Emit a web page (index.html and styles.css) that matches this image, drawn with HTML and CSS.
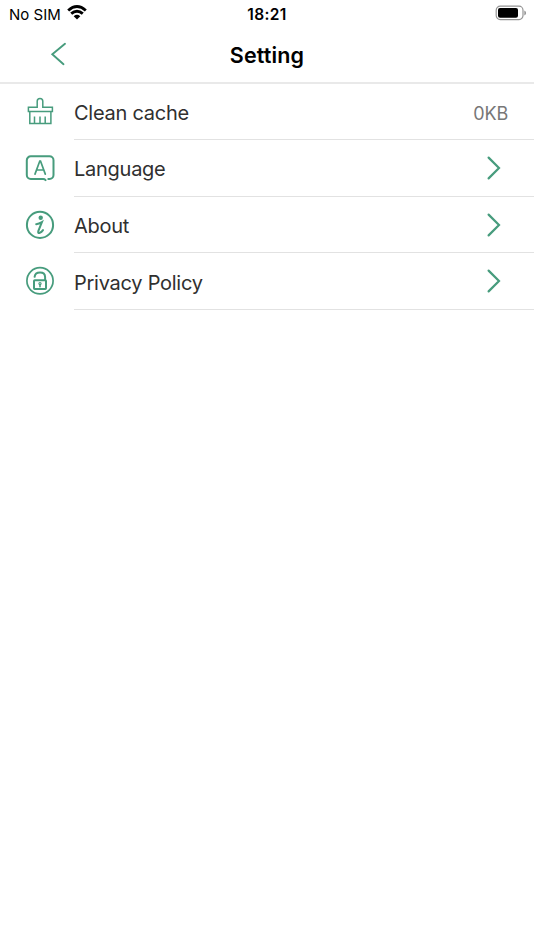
FILE: index.html
```html
<!DOCTYPE html>
<html lang="en">
<head>
<meta charset="utf-8">
<title>Setting</title>
<link rel="stylesheet" href="styles.css">
</head>
<body>
<div class="status">
  <div class="carrier"><span>No SIM</span>
    <svg class="wifi" width="20" height="15" viewBox="0 0 20 15"><g fill="none" stroke="#000" stroke-width="2.9"><path d="M1.2 5.5Q10-2.3 18.8 5.5"/><path d="M4.2 8.7Q10 3.6 15.8 8.7"/></g><path d="M6.7 11.2Q10 8.4 13.3 11.2L10 14.5Z"/></svg>
  </div>
  <time class="clock">18:21</time>
  <svg class="battery" width="32" height="16" viewBox="0 0 32 16"><rect x="1.2" y="1.2" width="26.8" height="13.4" rx="4" fill="none" stroke="#949494" stroke-width="1.2"/><rect x="3" y="3" width="20" height="9.8" rx="2"/><path d="M29.3 5.5Q31.1 6.3 31.1 8T29.3 10.4Z" fill="#949494"/></svg>
</div>
<header class="nav">
  <svg class="back" width="18" height="24" viewBox="0 0 18 24"><path d="M15 1.8 2.3 12.2 13.5 22.2"/></svg>
  <h1>Setting</h1>
</header>
<main class="list">
  <div class="row">
    <svg class="icon thin" viewBox="0 0 32 32"><path d="M4.4 11.2H13.2V5.3a2.8 2.8 0 0 1 5.6 0V11.2H28.4V15.5H4.4ZM5.8 15.5V27.6H26.9V15.5M10.5 20.5V27.6M16 20.5V27.6M21.2 20.5V27.6"/></svg>
    <div class="cell"><span class="label">Clean cache</span><span class="value">0KB</span></div>
  </div>
  <div class="row">
    <svg class="icon" viewBox="0 0 32 32"><path d="M24.3 27H25.5a4 4 0 0 0 4-4V8.3a4 4 0 0 0-4-4H6.8a4 4 0 0 0-4 4V23a4 4 0 0 0 4 4H19.2Q20.6 27 21.6 28.1"/><path d="M11 22.1 15.8 9H16.5L21.3 22.1M12.6 18H19.7" stroke-width="1.7"/></svg>
    <div class="cell"><span class="label">Language</span><svg class="arrow" viewBox="0 0 14 24"><path d="M1.6 1.6 12 12 1.6 22.4"/></svg></div>
  </div>
  <div class="row">
    <svg class="icon" viewBox="0 0 32 32"><circle cx="16" cy="15.9" r="13.1"/><circle class="dot" cx="16.7" cy="8.8" r="2.2"/><path d="M12.2 15.2C14.6 14.9 16.4 14 17.9 13.1L14.3 22.1Q13.6 24.5 15.8 23.8 17.5 23.2 19 21.1"/></svg>
    <div class="cell"><span class="label">About</span><svg class="arrow" viewBox="0 0 14 24"><path d="M1.6 1.6 12 12 1.6 22.4"/></svg></div>
  </div>
  <div class="row">
    <svg class="icon" viewBox="0 0 32 32"><circle cx="16" cy="15.8" r="13.1" stroke-width="1.7"/><rect x="10" y="15.2" width="12" height="8.8" rx=".7"/><path d="M10.6 11.8C11.2 6.3 20.9 5.9 21.1 12V15"/><circle cx="16" cy="18.6" r="1.1" stroke-width="1.2"/><path d="M16 19.6V21.8" stroke-width="1.6"/></svg>
    <div class="cell"><span class="label">Privacy Policy</span><svg class="arrow" viewBox="0 0 14 24"><path d="M1.6 1.6 12 12 1.6 22.4"/></svg></div>
  </div>
</main>
</body>
</html>
```
FILE: styles.css
```css
* { box-sizing: border-box; }
body { margin: 0; min-height: 950px; background: #fff; color: #000; font-family: Inter, "Liberation Sans", sans-serif; }
svg { display: block; flex: none; }
.status { height: 28px; padding: 0 7px 0 9px; display: grid; grid-template-columns: 1fr auto 1fr; align-items: center; font-size: 15px; line-height: 28px; }
.carrier { display: flex; align-items: center; gap: 6px; }
.carrier span, .clock { padding-top: 1px; line-height: 27px; }
.wifi { margin-top: -3px; }
.clock { font-weight: 600; font-size: 15.5px; letter-spacing: .35px; margin-right: 2px; }
.battery { justify-self: end; margin-top: -2px; }
.nav { height: 55.5px; display: grid; grid-template-columns: 1fr auto 1fr; align-items: center; border-bottom: 2px solid #e9e9e9; }
.back { margin-left: 50px; margin-top: -1px; fill: none; stroke: #479c7d; stroke-width: 1.9; stroke-linecap: round; }
h1 { margin: 0; font-size: 21.5px; line-height: 26px; font-weight: 600; letter-spacing: .12px; }
.nav::after { content: ""; }
.row { height: 56.67px; padding-left: 24px; display: flex; gap: 18px; }
.icon { width: 32px; height: 32px; margin-top: 12px; fill: none; stroke: #479c7d; stroke-width: 2; stroke-linecap: round; }
.thin { stroke-width: 1.5; stroke-linecap: butt; }
.dot { fill: #479c7d; stroke: none; }
.cell { flex: 1; display: flex; align-items: center; justify-content: space-between; padding-right: 26px; border-bottom: 1px solid #e2e2e2; color: #303030; }
.label { font-size: 20px; line-height: 28px; letter-spacing: -.26px; margin-top: 3px; }
.value { font-size: 18px; color: #777; letter-spacing: -.2px; margin-top: 4px; }
.arrow { width: 14px; height: 24px; margin-right: 7px; fill: none; stroke: #479c7d; stroke-width: 2.2; stroke-linecap: round; }
```
